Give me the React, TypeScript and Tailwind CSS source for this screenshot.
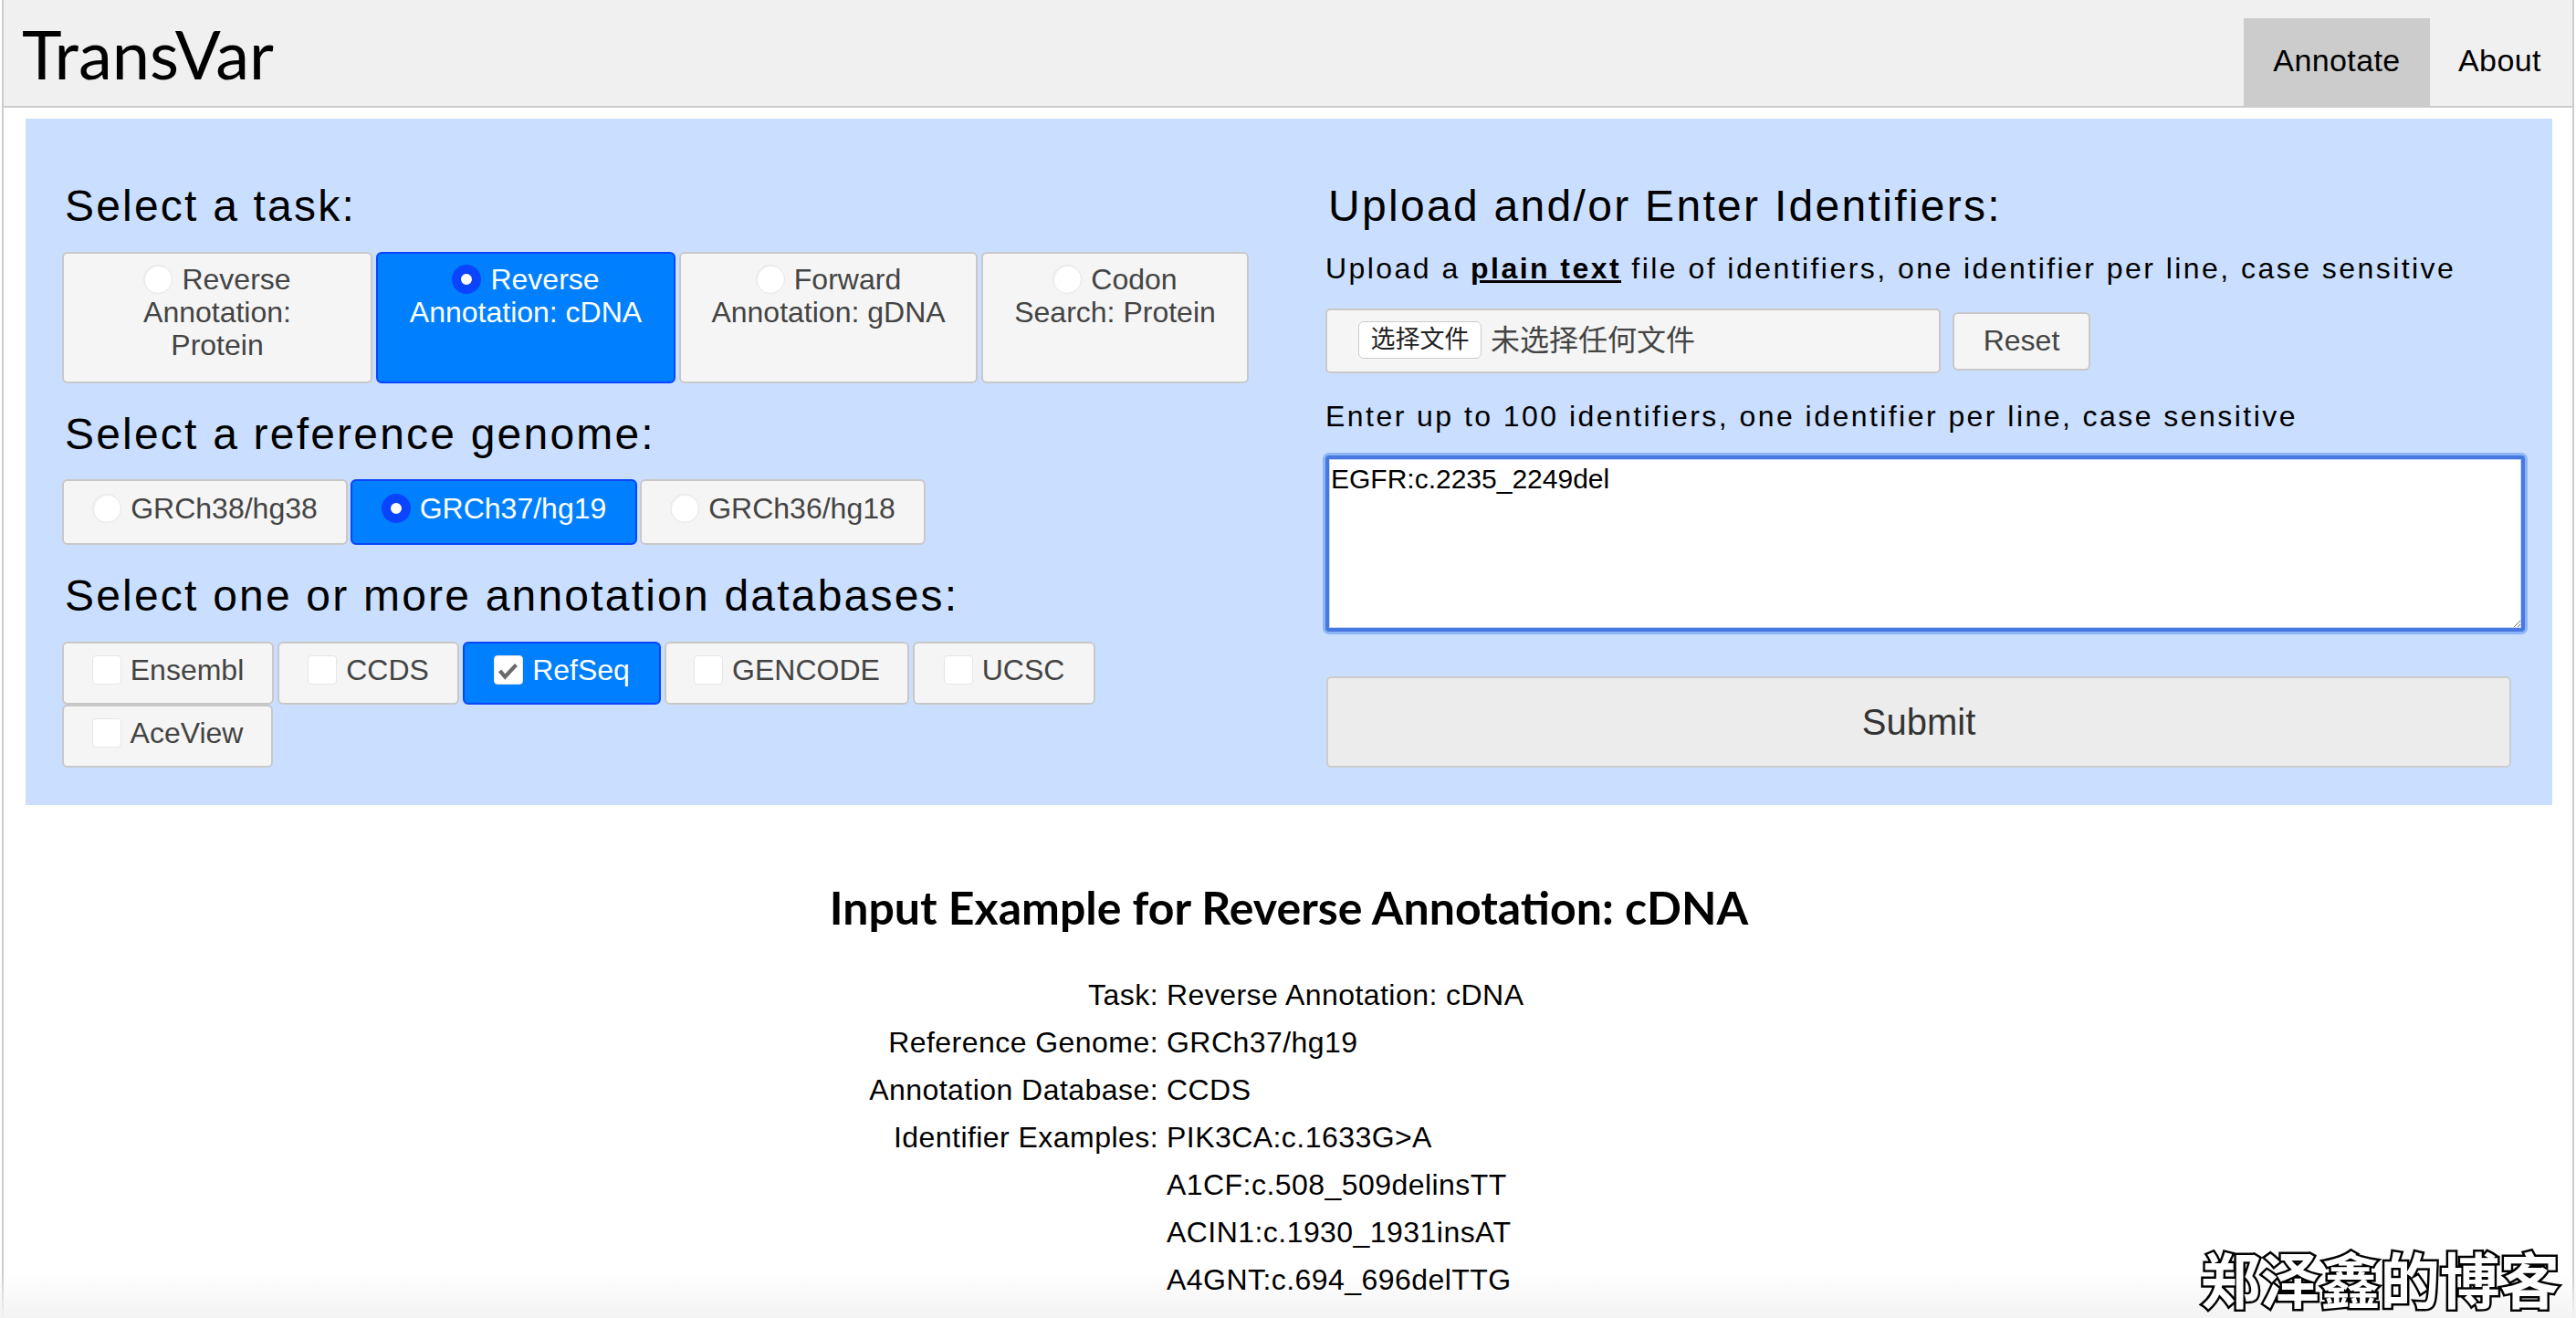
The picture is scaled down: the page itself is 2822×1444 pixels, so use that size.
import React from "react";

const sans = "font-['Liberation_Sans','Noto_Sans_CJK_SC',sans-serif]";

function Radio({ on }: { on?: boolean }) {
  return (
    <span
      className={
        on
          ? "inline-block align-[-5px] w-[32px] h-[32px] mr-[10px] rounded-full bg-white border-[10px] border-[#0a44ff]"
          : "inline-block align-[-5px] w-[32px] h-[32px] mr-[10px] rounded-full bg-white border border-[#e6e6e6] shadow-[inset_1px_1px_1px_#eeeeee]"
      }
    />
  );
}

function Check({ on }: { on?: boolean }) {
  return (
    <span className="inline-flex items-center justify-center align-[-5px] w-[32px] h-[32px] mr-[10px] rounded-[4px] bg-white border border-[#e6e6e6]">
      {on && (
        <svg viewBox="0 0 32 32" className="w-[32px] h-[32px]">
          <path d="M6 17l6 7L25 10" fill="none" stroke="#6a6a6a" strokeWidth="4.5" />
        </svg>
      )}
    </span>
  );
}

function Opt({
  on,
  className,
  children,
}: {
  on?: boolean;
  className: string;
  children: React.ReactNode;
}) {
  return (
    <div
      className={
        (on
          ? "bg-[#0080ff] border-[#0a44ff] text-white "
          : "bg-[#f5f5f5] border-[#c8c8c8] text-[#444444] ") +
        "border-2 rounded-[6px] text-center text-[32px] leading-[36px] shrink-0 " +
        className
      }
    >
      {children}
    </div>
  );
}

const Heading = ({ children, className }: { children: React.ReactNode; className: string }) => (
  <h2 className={"text-[48px] leading-[56px] text-black tracking-[2.2px] " + className}>{children}</h2>
);

const rows: [string, string][] = [
  ["Task:", "Reverse Annotation: cDNA"],
  ["Reference Genome:", "GRCh37/hg19"],
  ["Annotation Database:", "CCDS"],
  ["Identifier Examples:", "PIK3CA:c.1633G>A"],
  ["", "A1CF:c.508_509delinsTT"],
  ["", "ACIN1:c.1930_1931insAT"],
  ["", "A4GNT:c.694_696delTTG"],
];

export default function App() {
  return (
    <div className={"relative h-[1444px] w-[2822px] overflow-hidden bg-white " + sans}>
      <div className="mx-[2px] h-full border-x-2 border-[#cccccc]">
        <header className="flex justify-between items-end h-[118px] bg-[#f0f0f0] border-b-2 border-[#cccccc] pl-[20px]">
          <div className="self-start mt-[15px] text-[74px] leading-[88px] text-black font-['Lato',sans-serif]">
            TransVar
          </div>
          <nav className="flex text-[34px] tracking-[0.4px] text-black">
            <div className="h-[96px] w-[204px] bg-[#cccccc] flex items-center justify-center pb-[4px]">Annotate</div>
            <div className="h-[96px] w-[156px] flex items-center pl-[31px] pb-[4px]">About</div>
          </nav>
        </header>

        <div className="pt-[12px] pl-[24px] pr-[22px]">
          <section className="grid grid-cols-2 h-[752px] w-[2768px] bg-[#cadfff]">
            <div className="pl-[40px] pr-[10px] pt-[68px]">
              <Heading className="ml-[3px] mb-[22px]">Select a task:</Heading>
              <div className="flex gap-[4px]">
                <Opt className="w-[340px] h-[144px] pt-[10px] px-[34px]"><Radio />Reverse Annotation: Protein</Opt>
                <Opt on className="w-[328px] h-[144px] pt-[10px] px-[20px]"><Radio on />Reverse Annotation: cDNA</Opt>
                <Opt className="w-[327px] h-[144px] pt-[10px] px-[20px]"><Radio />Forward Annotation: gDNA</Opt>
                <Opt className="w-[293px] h-[144px] pt-[10px] px-[20px]"><Radio />Codon Search: Protein</Opt>
              </div>
              <Heading className="ml-[3px] mt-[28px] mb-[21px]">Select a reference genome:</Heading>
              <div className="flex gap-[3px]">
                <Opt className="w-[313px] h-[72px] pt-[12px]"><Radio />GRCh38/hg38</Opt>
                <Opt on className="w-[314px] h-[72px] pt-[12px]"><Radio on />GRCh37/hg19</Opt>
                <Opt className="w-[313px] h-[72px] pt-[12px]"><Radio />GRCh36/hg18</Opt>
              </div>
              <Heading className="ml-[3px] mt-[28px] mb-[22px]">Select one or more annotation databases:</Heading>
              <div className="flex flex-wrap gap-x-[4px] gap-y-0 w-[1300px]">
                <Opt className="w-[232px] h-[69px] pt-[11px]"><Check />Ensembl</Opt>
                <Opt className="w-[199px] h-[69px] pt-[11px]"><Check />CCDS</Opt>
                <Opt on className="w-[217px] h-[69px] pt-[11px]"><Check on />RefSeq</Opt>
                <Opt className="w-[268px] h-[69px] pt-[11px]"><Check />GENCODE</Opt>
                <Opt className="w-[200px] h-[69px] pt-[11px]"><Check />UCSC</Opt>
                <Opt className="w-[231px] h-[69px] pt-[11px]"><Check />AceView</Opt>
              </div>
            </div>

            <div className="pl-[40px] pr-[28px] pt-[68px]">
              <Heading className="ml-[3px] mb-[20px] tracking-[2.3px]">Upload and/or Enter Identifiers:</Heading>
              <p className="text-[32px] leading-[40px] text-black tracking-[2.45px] whitespace-nowrap">
                Upload a <a className="font-bold underline">plain text</a> file of identifiers, one identifier per line, case sensitive
              </p>
              <div className="flex items-center gap-[13px] mt-[24px]">
                <div className="flex items-center w-[674px] h-[71px] pl-[34px] pb-[2px] bg-[#f5f5f5] border-2 border-[#c8c8c8] rounded-[5px] text-[#444444] text-[32px]">
                  <span className="flex items-center justify-center w-[135px] h-[41px] mr-[10px] bg-white border border-[#cccccc] rounded-[6px] text-[27px] text-[#222222]">选择文件</span>
                  未选择任何文件
                </div>
                <Opt className="w-[151px] h-[64px] pt-[11px]">Reset</Opt>
              </div>
              <p className="text-[32px] leading-[40px] text-black tracking-[2.45px] whitespace-nowrap mt-[27px]">
                Enter up to 100 identifiers, one identifier per line, case sensitive
              </p>
              <textarea
                defaultValue="EGFR:c.2235_2249del"
                className="block w-[1314px] h-[193px] mt-[23px] py-[5px] px-[2px] bg-white text-[30px] leading-[34px] text-black border-[4px] border-[#4678e0] rounded-[4px] outline-none shadow-[0_0_0_3px_#8db4f7,inset_0_0_0_1px_#c0d4f8]"
              />
              <button className="block w-[1298px] h-[100px] mt-[49px] ml-[1px] bg-[#ececec] border-2 border-[#cccccc] rounded-[5px] text-[40px] text-[#333333]">
                Submit
              </button>
            </div>
          </section>

          <h3 className="mt-[80px] text-center text-[50px] leading-[64px] font-bold text-black font-['Lato',sans-serif]">
            Input Example for Reverse Annotation: cDNA
          </h3>
          <div className="relative z-10 mt-[38px] grid grid-cols-[1241px_1fr] gap-x-[9px] text-[32px] leading-[52px] tracking-[0.45px] text-black">
            {rows.map(([k, v], i) => (
              <React.Fragment key={i}>
                <div className="text-right">{k}</div>
                <div>{v}</div>
              </React.Fragment>
            ))}
          </div>
        </div>
      </div>

      <div className="absolute left-0 right-0 bottom-0 h-[50px] bg-gradient-to-b from-transparent to-[#f3f3f3]" />
      <div className="absolute z-20 right-[18px] bottom-0 text-[65.5px] leading-[88px] text-white font-['Noto_Sans_CJK_SC',sans-serif] font-bold [-webkit-text-stroke:5px_black] [paint-order:stroke_fill]">
        郑泽鑫的博客
      </div>
    </div>
  );
}
